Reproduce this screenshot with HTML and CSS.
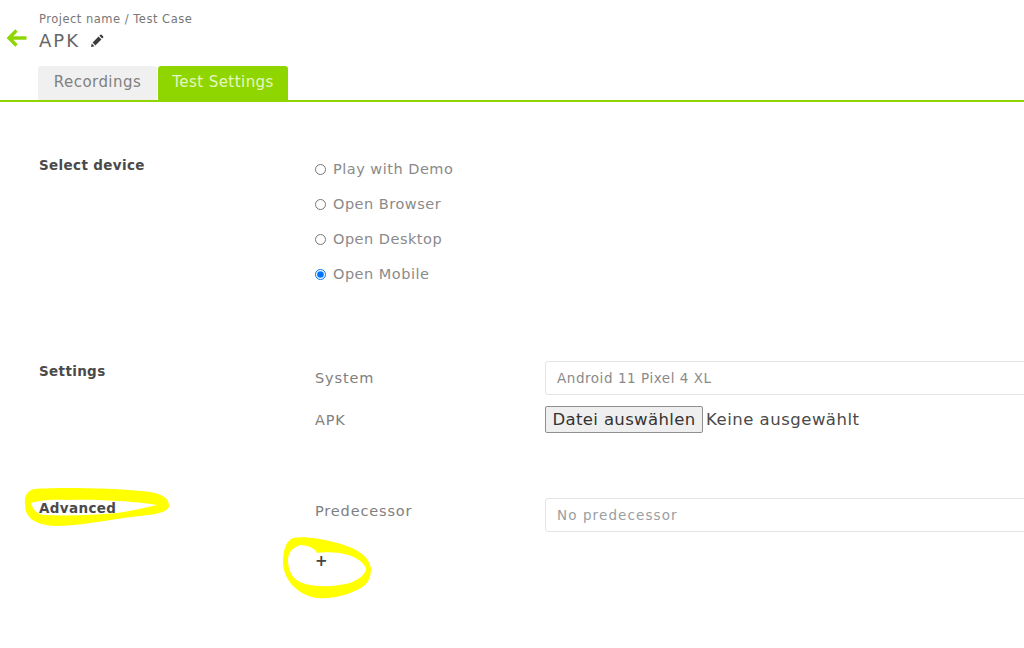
FILE: index.html
```html
<!DOCTYPE html>
<html lang="en">
<head>
    <meta charset="UTF-8">
    <meta name="viewport" content="width=device-width, initial-scale=1.0">
    <title>Test Settings</title>
    <link rel="stylesheet" href="styles.css">
</head>
<body>
    <div class="page-header">
        <svg class="back-arrow" width="22" height="20" viewBox="0 0 22 20">
            <path d="M20.5 10H3M10.5 2.5L3 10l7.5 7.5" fill="none" stroke="#8fd600" stroke-width="3.4"/>
        </svg>
        <div class="header-text">
            <div class="breadcrumb">Project name / Test Case</div>
            <div class="title-row">
                <h1>APK</h1>
                <svg class="pencil" width="14" height="14" viewBox="0 0 14 14">
                    <path d="M1 13l.7-3.6 2.9 2.9zM2.6 8.6l6-6 2.8 2.8-6 6zM9.4 1.8l1-1q.6-.5 1.2 0l1.6 1.6q.5.6 0 1.2l-1 1z" fill="#3c3c3c"/>
                </svg>
            </div>
        </div>
    </div>

    <div class="tabs">
        <div class="tab">Recordings</div>
        <div class="tab active">Test Settings</div>
    </div>

    <div class="section device-section">
        <div class="section-title">Select device</div>
        <div class="radio-list">
            <label class="radio-item"><input type="radio" name="device"> Play with Demo</label>
            <label class="radio-item"><input type="radio" name="device"> Open Browser</label>
            <label class="radio-item"><input type="radio" name="device"> Open Desktop</label>
            <label class="radio-item"><input type="radio" name="device" checked> Open Mobile</label>
        </div>
    </div>

    <div class="section settings-section">
        <div class="section-title">Settings</div>
        <div class="fields">
            <div class="field">
                <label class="field-label">System</label>
                <div class="select-box">Android 11 Pixel 4 XL</div>
            </div>
            <div class="field file-field">
                <label class="field-label">APK</label>
                <div class="file-pick">
                    <button class="file-btn" type="button">Datei auswählen</button>
                    <span class="file-name">Keine ausgewählt</span>
                </div>
            </div>
        </div>
    </div>

    <div class="section advanced-section">
        <div class="section-title">Advanced</div>
        <div class="fields">
            <div class="field">
                <label class="field-label predecessor-label">Predecessor</label>
                <div class="select-box placeholder">No predecessor</div>
            </div>
            <div class="add-btn">+</div>
        </div>
    </div>

    <!-- yellow marker scribbles on top of the screenshot -->
    <svg class="scribble" width="1024" height="648" viewBox="0 0 1024 648">
        <path fill-rule="evenodd" fill="#ffff00" d="M25 505C24 496 27 491 34 489C60 487 120 488 150 492C162 494 169 498 169 506C168 512 158 514 140 516C105 520 80 526 55 526C35 525 25 518 25 505ZM31 503C33 510 37 514 44 515C70 516 95 515 117 513C130 511 145 508 157 505C140 502 100 499 67 500C55 499 40 500 31 503Z"/>
        <path fill-rule="evenodd" fill="#ffff00" d="M283 563C283 550 286 541 293 538C305 536 322 539 333 542C352 546 370 555 371 569C371 580 366 586 357 590C345 596 330 599 318 598C303 597 284 584 283 563ZM288 560C288 570 292 577 298 581C310 588 335 587 350 583C360 579 366 574 366 568C362 560 352 555 340 553C332 552 322 552 317 553C316 549 308 545 300 545C292 548 288 553 288 560Z"/>
    </svg>
</body>
</html>
```

FILE: styles.css
```css
body {
    font-family: 'DejaVu Sans', sans-serif;
    margin: 0;
    padding: 0;
    width: 1024px;
    height: 648px;
    overflow: hidden;
    position: relative;
    background: white;
    color: #8a8a8a;
}

.page-header {
    display: flex;
    align-items: flex-start;
    padding: 12px 0 0 6px;
    height: 66px;
    box-sizing: border-box;
}

.back-arrow {
    margin-top: 16px;
    margin-right: 11px;
}

.breadcrumb {
    font-size: 11.5px;
    line-height: 14px;
    letter-spacing: 0.5px;
    color: #777;
}

.title-row {
    display: flex;
    align-items: center;
    gap: 10px;
    margin-top: 5px;
}

.title-row h1 {
    margin: 0;
    font-size: 18px;
    font-weight: 400;
    line-height: 20px;
    letter-spacing: 2px;
    color: #666;
}

.tabs {
    display: flex;
    gap: 1px;
    padding-left: 38px;
    height: 34px;
    border-bottom: 2px solid #8fd600;
}

.tab {
    width: 119px;
    text-align: center;
    font-size: 15px;
    letter-spacing: 0.45px;
    line-height: 32px;
    background: #f0f0f0;
    color: #808080;
    border-radius: 3px 3px 0 0;
}

.tab.active {
    width: 130px;
    background: #8fd600;
    color: #e6f7c0;
}

.section {
    display: grid;
    grid-template-columns: 276px 1fr;
    padding-left: 39px;
}

.section-title {
    font-size: 13.5px;
    font-weight: 600;
    letter-spacing: 0.35px;
    color: #4a4a4a;
    line-height: 18px;
}

.device-section {
    margin-top: 54px;
}

.radio-list {
    display: flex;
    flex-direction: column;
    gap: 17px;
    margin-top: 4px;
}

.radio-item {
    display: flex;
    align-items: center;
    font-size: 14.5px;
    letter-spacing: 0.5px;
    line-height: 18px;
    color: #8a8a8a;
}

.radio-item input {
    width: 11px;
    height: 11px;
    margin: 0 7px 0 0;
}

.settings-section {
    margin-top: 79px;
}

.settings-section .fields {
    margin-top: -1px;
}

.advanced-section {
    margin-top: 65px;
}

.advanced-section .section-title {
    margin-top: 1px;
}

.field {
    display: grid;
    grid-template-columns: 230px 520px;
    align-items: center;
}

.field-label {
    font-size: 14.5px;
    letter-spacing: 0.85px;
    color: #808080;
}

.predecessor-label {
    margin-top: -8px;
}

.select-box {
    height: 34px;
    box-sizing: border-box;
    border: 1px solid #e2e4e6;
    border-radius: 3px;
    padding: 0 11px;
    font-size: 13.5px;
    letter-spacing: 0.55px;
    line-height: 32px;
    color: #8a8a8a;
}

.select-box.placeholder {
    letter-spacing: 1.1px;
    color: #9a9ea2;
}

.file-field {
    margin-top: 11px;
}

.file-pick {
    display: flex;
    align-items: center;
    gap: 3px;
}

.file-btn {
    height: 27px;
    width: 158px;
    padding: 0;
    font-family: 'DejaVu Sans', sans-serif;
    font-size: 16.5px;
    letter-spacing: 0.35px;
    color: #333;
    background: #efefef;
    border: 1px solid #8f8f8f;
    border-radius: 2px;
}

.file-name {
    font-size: 16.5px;
    letter-spacing: 0.5px;
    color: #4a4a4a;
}

.add-btn {
    margin-top: 19px;
    font-size: 15px;
    font-weight: 700;
    line-height: 20px;
    color: #444;
}

.scribble {
    position: absolute;
    top: 0;
    left: 0;
    pointer-events: none;
}
```
